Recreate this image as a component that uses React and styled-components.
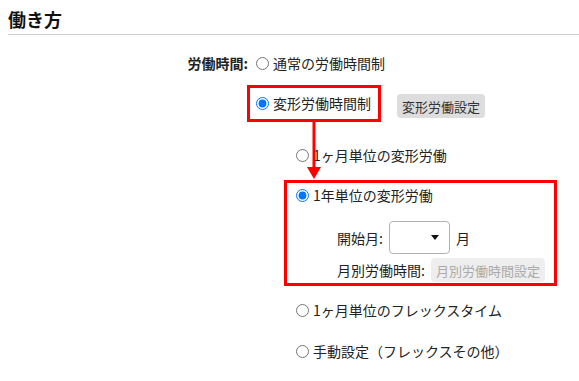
import React from "react";
import styled, { createGlobalStyle } from "styled-components";

const GlobalStyle = createGlobalStyle`
  body {
    margin: 0;
    background: #ffffff;
    color: #222222;
    font-family: "Noto Sans CJK JP", "Noto Sans", sans-serif;
    font-size: 14px;
  }
`;

const Page = styled.div`
  padding-left: 8px;
  width: 571px;
`;

const Title = styled.h2`
  margin: 0;
  padding: 6px 0 2px;
  font-size: 18px;
  font-weight: 700;
  line-height: 26px;
  color: #111111;
  border-bottom: 1px solid #cccccc;
`;

const Form = styled.div`
  display: grid;
  grid-template-columns: 240px 1fr;
  column-gap: 8px;
  margin-top: 18px;
`;

const FieldLabel = styled.div`
  text-align: right;
  font-weight: 700;
  line-height: 20px;
`;

const Options = styled.div`
  position: relative;
  display: flex;
  flex-direction: column;
  align-items: flex-start;
`;

const Option = styled.label`
  display: flex;
  align-items: center;
  height: 20px;
  line-height: 20px;
  white-space: nowrap;
  margin-top: ${({ $top }) => $top || 0}px;
`;

const Radio = styled.input.attrs({ type: "radio" })`
  width: 13px;
  height: 13px;
  margin: 0 4px 0 0;
`;

const ChoiceLine = styled.div`
  display: flex;
  align-items: flex-start;
  gap: 16px;
  margin-top: 12px;
`;

const Highlight = styled.div`
  border: 3px solid #ff0000;
  box-sizing: border-box;
  margin-left: ${({ $pull }) => -$pull}px;
  padding: ${({ $pad }) => $pad};
  width: ${({ $width }) => ($width ? `${$width}px` : "auto")};
`;

const Button = styled.span`
  display: inline-flex;
  align-items: center;
  height: 24px;
  padding: 0 5px;
  border-radius: 4px;
  font-size: 13px;
  white-space: nowrap;
  background: ${({ $disabled }) => ($disabled ? "#eeeeee" : "#dddddd")};
  color: ${({ $disabled }) => ($disabled ? "#aaaaaa" : "#333333")};
  margin-top: ${({ $top }) => $top || 0}px;
`;

const Nested = styled.div`
  display: flex;
  flex-direction: column;
  align-items: flex-start;
  margin-left: 40px;
`;

const SubFields = styled.div`
  display: flex;
  flex-direction: column;
  gap: 4px;
  margin: 16px 0 0 41px;
`;

const FieldRow = styled.div`
  display: flex;
  align-items: center;
  gap: 6px;
  white-space: nowrap;
`;

const SelectBox = styled.div`
  display: flex;
  align-items: center;
  justify-content: flex-end;
  width: 61px;
  height: 33px;
  box-sizing: border-box;
  padding-right: 10px;
  border: 1px solid #b3b3b3;
  border-radius: 4px;
  background: #ffffff;
`;

const Caret = styled.span`
  width: 0;
  height: 0;
  border-left: 4px solid transparent;
  border-right: 4px solid transparent;
  border-top: 5px solid #111111;
`;

const Arrow = styled.svg`
  position: absolute;
  left: 50px;
  top: 69px;
`;

export default function App() {
  return (
    <>
      <GlobalStyle />
      <Page>
        <Title>働き方</Title>
        <Form>
          <FieldLabel>労働時間:</FieldLabel>
          <Options>
            <Option>
              <Radio name="work" />
              通常の労働時間制
            </Option>
            <ChoiceLine>
              <Highlight $pull={9} $pad="5px 7px 6px 6px">
                <Option>
                  <Radio name="work" defaultChecked />
                  変形労働時間制
                </Option>
              </Highlight>
              <Button $top={9}>変形労働設定</Button>
            </ChoiceLine>
            <Nested>
              <Option $top={23}>
                <Radio name="variant" />
                1ヶ月単位の変形労働
              </Option>
              <Highlight $pull={12} $pad="2px 9px 1px" $width={273} style={{ marginTop: 15 }}>
                <Option>
                  <Radio name="variant" defaultChecked />
                  1年単位の変形労働
                </Option>
                <SubFields>
                  <FieldRow>
                    開始月:
                    <SelectBox>
                      <Caret />
                    </SelectBox>
                    月
                  </FieldRow>
                  <FieldRow>
                    月別労働時間:
                    <Button $disabled>月別労働時間設定</Button>
                  </FieldRow>
                </SubFields>
              </Highlight>
              <Option $top={14}>
                <Radio name="variant" />
                1ヶ月単位のフレックスタイム
              </Option>
              <Option $top={21}>
                <Radio name="variant" />
                手動設定（フレックスその他）
              </Option>
            </Nested>
            <Arrow width="16" height="57" viewBox="0 0 16 57">
              <line x1="8" y1="0" x2="8" y2="46" stroke="#ff0000" strokeWidth="3" />
              <polygon points="1,45 15,45 8,57" fill="#ff0000" />
            </Arrow>
          </Options>
        </Form>
      </Page>
    </>
  );
}
